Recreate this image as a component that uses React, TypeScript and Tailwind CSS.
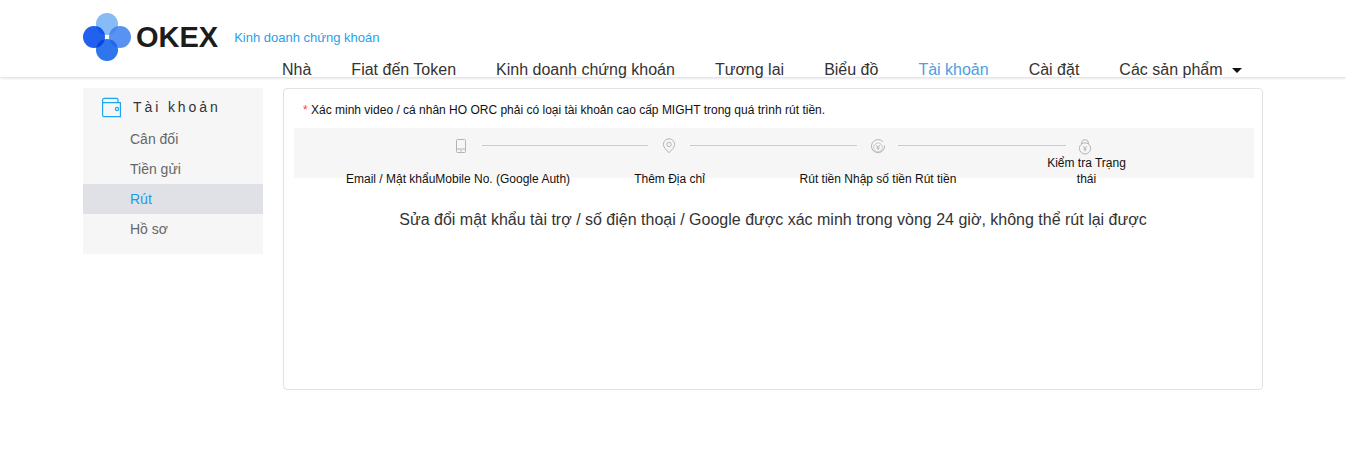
import { ReactNode } from "react"

const navItems = ["Nhà", "Fiat đến Token", "Kinh doanh chứng khoán", "Tương lai", "Biểu đồ", "Tài khoản", "Cài đặt"]
const menuItems = ["Cân đối", "Tiền gửi", "Rút", "Hồ sơ"]

function Logo() {
  return (
    <svg width="50" height="50" viewBox="0 0 50 50">
      <defs>
        <clipPath id="clipLeft"><circle cx="12" cy="25" r="11" /></clipPath>
        <clipPath id="clipRight"><circle cx="38" cy="25" r="11" /></clipPath>
      </defs>
      <circle cx="25" cy="12" r="11" fill="#86bbf5" />
      <circle cx="25" cy="38" r="11" fill="#2f75ee" />
      <circle cx="12" cy="25" r="11" fill="#2260ee" />
      <circle cx="38" cy="25" r="11" fill="#5a92f2" />
      <g clipPath="url(#clipLeft)">
        <circle cx="25" cy="12" r="11" fill="#0f55ea" />
        <circle cx="25" cy="38" r="11" fill="#0546dc" />
      </g>
      <g clipPath="url(#clipRight)">
        <circle cx="25" cy="12" r="11" fill="#4a88f0" />
        <circle cx="25" cy="38" r="11" fill="#1f66ea" />
      </g>
    </svg>
  )
}

function WalletIcon() {
  return (
    <svg width="21" height="21" viewBox="0 0 21 21" fill="none" stroke="#1ea5f2" strokeWidth="1.2">
      <path d="M1.6 5V18.2Q1.6 19.6 3 19.6H19.4V5.6H1.6" />
      <path d="M1.6 5.6V3.2Q1.6 1.4 3.4 1.4H15.8Q17 1.4 17 2.8V5.6" />
      <circle cx="16" cy="12" r="1.6" />
    </svg>
  )
}

function PhoneIcon() {
  return (
    <svg width="16" height="16" viewBox="0 0 16 16" fill="none" stroke="#b4b4b4" strokeWidth="1">
      <rect x="3.5" y="1.5" width="9" height="13" rx="1" />
      <path d="M3.5 11H12.5" />
      <rect x="7.2" y="12.2" width="1.6" height="1.2" fill="#b4b4b4" stroke="none" />
    </svg>
  )
}

function PinIcon() {
  return (
    <svg width="16" height="16" viewBox="0 0 16 16" fill="none" stroke="#b4b4b4" strokeWidth="1">
      <path d="M8 14.8C5.4 11.8 2.4 9.4 2.4 6.4A5.6 5.6 0 0 1 13.6 6.4C13.6 9.4 10.6 11.8 8 14.8Z" />
      <circle cx="8" cy="6.4" r="2.2" />
    </svg>
  )
}

function CoinIcon() {
  return (
    <svg width="16" height="16" viewBox="0 0 16 16" fill="none" stroke="#b4b4b4" strokeWidth="1">
      <path d="M13 2.8A6.6 6.6 0 1 0 14.6 6.6" />
      <circle cx="8" cy="8.4" r="4.4" strokeWidth="0.7" />
      <path d="M6.2 6.2L8 8.4L9.8 6.2M8 8.4V11M6.5 9H9.5" />
    </svg>
  )
}

function LockIcon() {
  return (
    <svg width="16" height="16" viewBox="0 0 16 16" fill="none" stroke="#b4b4b4" strokeWidth="1">
      <path d="M4.6 5V4A3.4 3.4 0 0 1 11.4 4V5" />
      <circle cx="8" cy="9.4" r="5.6" />
      <path d="M6.2 7.2L8 9.4L9.8 7.2M8 9.4V12.4M6.5 10H9.5" />
    </svg>
  )
}

function Line() {
  return <div className="h-px bg-[#cccccc]" />
}

function StepLabel({ children }: { children: ReactNode }) {
  return <div className="flex justify-center text-center text-[12px] leading-[16px] text-[#111]">{children}</div>
}

export default function App() {
  return (
    <div className="min-h-[458px] bg-white font-['Liberation_Sans',Arial,sans-serif]">
      <header className="h-[77px] pl-[83px] shadow-[0_1px_3px_rgba(0,0,0,0.16)]">
        <div className="flex h-[60px] items-start pt-[12px]">
          <div className="w-[50px] -ml-px"><Logo /></div>
          <span className="ml-[4px] text-[29px] leading-[50px] font-bold text-[#1c1c1c]">OKEX</span>
          <span className="ml-[16px] mt-[18px] text-[13px] leading-[16px] text-[#2a9fe8]">Kinh doanh chứng khoán</span>
        </div>
        <nav className="ml-[199px] flex items-center gap-[40px] text-[16px] leading-[20px] text-[#333]">
          {navItems.map((item) => (
            <span key={item} className={item === "Tài khoản" ? "text-[#4d9fe0]" : ""}>{item}</span>
          ))}
          <span className="flex items-center gap-[9px]">
            Các sản phẩm
            <span className="h-0 w-0 border-x-[5px] border-t-[5px] border-x-transparent border-t-[#111]" />
          </span>
        </nav>
      </header>

      <div className="flex gap-[20px] pl-[83px] pt-[11px]">
        <aside className="h-[166px] w-[180px] bg-[#f6f6f7]">
          <div className="flex h-[36px] items-center pl-[18px] pt-[2px]">
            <WalletIcon />
            <span className="ml-[11px] text-[14px] tracking-[2.9px] text-[#333]">Tài khoản</span>
          </div>
          {menuItems.map((item) => (
            <div
              key={item}
              className={
                item === "Rút"
                  ? "h-[30px] bg-[#dfe1e6] pl-[47px] text-[14px] leading-[30px] text-[#1a9be8]"
                  : "h-[30px] pl-[47px] text-[14px] leading-[30px] text-[#666]"
              }
            >
              {item}
            </div>
          ))}
        </aside>

        <main className="h-[302px] w-[980px] rounded-[4px] border border-[#e2e2e2] pl-[10px] pr-[8px]">
          <p className="h-[39px] pl-[9px] pt-[13px] text-[12px] leading-[16px] text-[#111]">
            <span className="text-[#f5453d]">* </span>
            Xác minh video / cá nhân HO ORC phải có loại tài khoản cao cấp MIGHT trong quá trình rút tiền.
          </p>

          <div className="h-[50px] bg-[#f6f6f6]">
            <div className="flex h-[28px] items-start pl-[159px] pt-[10px]">
              <PhoneIcon />
              <div className="ml-[13px] mt-[7px] w-[166px]"><Line /></div>
              <div className="ml-[13px]"><PinIcon /></div>
              <div className="ml-[13px] mt-[7px] w-[167px]"><Line /></div>
              <div className="ml-[13px] mt-px"><CoinIcon /></div>
              <div className="ml-[12px] mt-[7px] w-[168px]"><Line /></div>
              <div className="ml-[11px] mt-px"><LockIcon /></div>
            </div>
            <div className="flex h-[31px] items-end pl-[52px] whitespace-nowrap">
              <div className="w-[224px]"><StepLabel>Email / Mật khẩuMobile No. (Google Auth)</StepLabel></div>
              <div className="w-[199px]"><StepLabel>Thêm Địa chỉ</StepLabel></div>
              <div className="w-[218px]"><StepLabel>Rút tiền Nhập số tiền Rút tiền</StepLabel></div>
              <div className="w-[199px]"><StepLabel>Kiểm tra Trạng<br />thái</StepLabel></div>
            </div>
          </div>

          <p className="pt-[32px] pr-[2px] text-center text-[16px] leading-[20px] text-[#333]">
            Sửa đổi mật khẩu tài trợ / số điện thoại / Google được xác minh trong vòng 24 giờ, không thể rút lại được
          </p>
        </main>
      </div>
    </div>
  )
}
